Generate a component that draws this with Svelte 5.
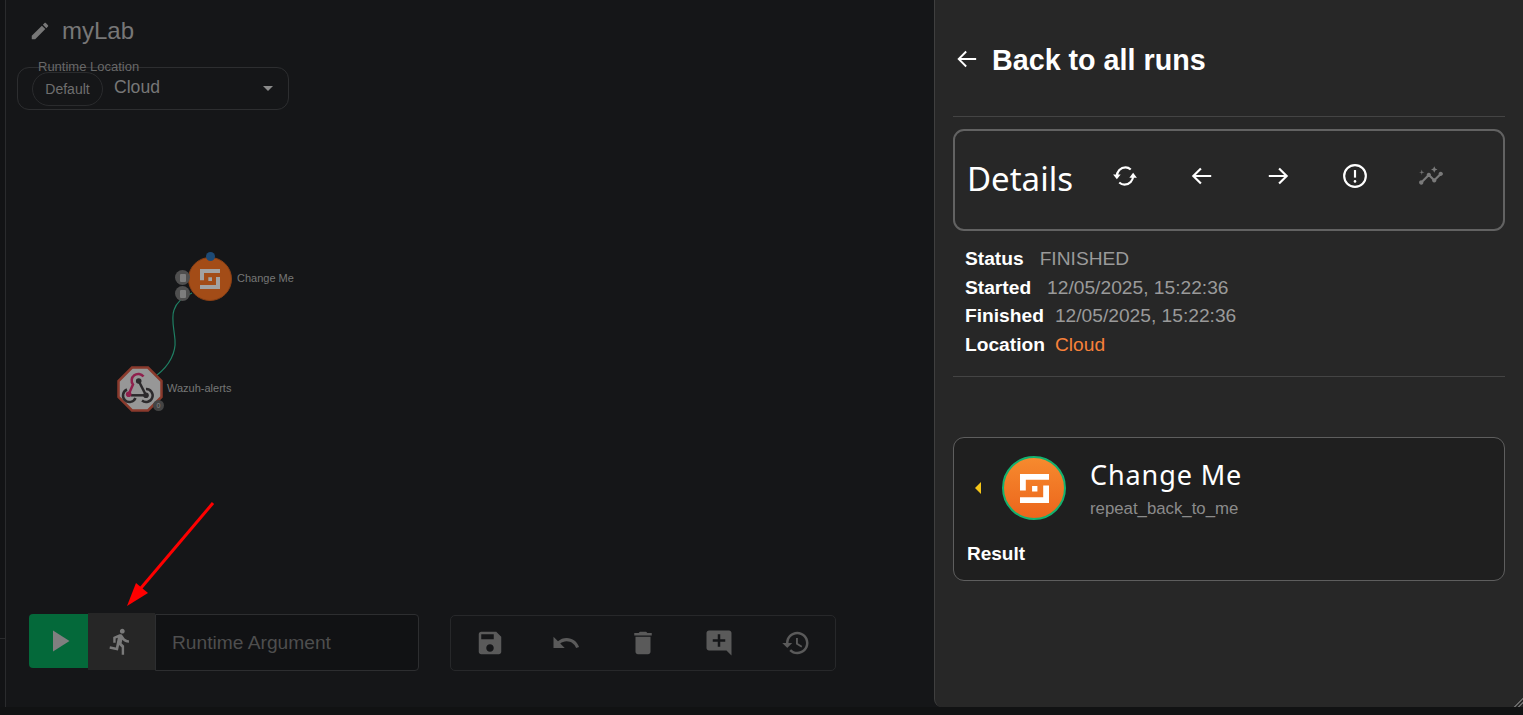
<script>
  const statusRows = [
    { label: 'Status', value: 'FINISHED' },
    { label: 'Started', value: '12/05/2025, 15:22:36' },
    { label: 'Finished', value: '12/05/2025, 15:22:36' },
    { label: 'Location', value: 'Cloud', accent: true }
  ];
  const tools = [
    'M17 3H5c-1.11 0-2 .9-2 2v14c0 1.1.89 2 2 2h14c1.1 0 2-.9 2-2V7l-4-4zm-5 16c-1.66 0-3-1.34-3-3s1.34-3 3-3 3 1.34 3 3-1.34 3-3 3zm3-10H5V5h10v4z',
    'M12.5 8c-2.65 0-5.05.99-6.9 2.6L2 7v9h9l-3.62-3.62c1.39-1.16 3.16-1.88 5.12-1.88 3.54 0 6.55 2.31 7.6 5.5l2.37-.78C21.08 11.03 17.15 8 12.5 8z',
    'M6 19c0 1.1.9 2 2 2h8c1.1 0 2-.9 2-2V7H6v12zM19 4h-3.5l-1-1h-5l-1 1H5v2h14V4z',
    'M21.99 4c0-1.1-.89-2-1.99-2H4c-1.1 0-2 .9-2 2v12c0 1.1.9 2 2 2h14l4 4-.01-18zM17 11h-4v4h-2v-4H7V9h4V5h2v4h4v2z',
    'M13 3c-4.97 0-9 4.03-9 9H1l3.89 3.89.07.14L9 12H6c0-3.87 3.13-7 7-7s7 3.13 7 7-3.13 7-7 7c-1.93 0-3.68-.79-4.94-2.06l-1.42 1.42C8.27 19.99 10.51 21 13 21c4.97 0 9-4.03 9-9s-4.03-9-9-9zm-1 5v5l4.28 2.54.72-1.21-3.5-2.08V8H12z'
  ];
</script>

{#snippet logo(size, color)}
  <svg width={size} height={size} viewBox="0 0 30 30" aria-hidden="true">
    <path fill={color} d="M0 0H30V6H6V17H0ZM24 12H30V30H0V24H24ZM12.500 12.500H18V18H12.500Z" />
  </svg>
{/snippet}

<div class="page">
  <main class="main">
    <div class="rail"><div class="rail-top"></div></div>
    <section class="canvas">
      <div class="title">
        <svg class="edit" viewBox="0 0 24 24"><path d="M3 17.25V21h3.75L17.81 9.94l-3.75-3.75L3 17.25zM20.71 7.04c.39-.39.39-1.02 0-1.41l-2.34-2.34c-.39-.39-1.02-.39-1.41 0l-1.83 1.83 3.75 3.75 1.83-1.83z" /></svg>
        <span>myLab</span>
      </div>

      <div class="location">
        <span class="legend">Runtime Location</span>
        <span class="chip">Default</span>
        <span class="loc-value">Cloud</span>
        <span class="caret"></span>
      </div>

      <div class="graph">
        <svg class="edge" width="300" height="180" viewBox="0 0 300 180">
          <path d="M157 265C170 255 176 242 175 230C174 218 171 208 174 200C176 193 183 187 192 183" fill="none" stroke="#1f7f63" stroke-width="1.2" />
        </svg>
        <div class="dot-top"></div>
        <div class="node-orange">{@render logo(20, '#a2a2a2')}</div>
        <div class="mini mini-a"><i></i></div>
        <div class="mini mini-b"><i></i></div>
        <span class="node-label label-change">Change Me</span>

        <svg class="node-hook" width="46" height="46" viewBox="0 0 46 46">
          <path d="M15 1.500H31L44.500 15V31L31 44.500H15L1.500 31V15Z" fill="#979797" stroke="#8a3a2c" stroke-width="2.500" />
          <g fill="none" stroke-width="2.500">
            <path d="M10 23.500A6.500 6.500 0 1 0 18.500 32" stroke="#2c2a2c" />
            <path d="M14 29.300H29" stroke="#2c2a2c" />
            <path d="M29 23A6.500 6.500 0 1 1 25 34.500" stroke="#2c2a2c" />
            <path d="M21.700 15L29 29.300" stroke="#2c2a2c" />
            <path d="M26.500 10.500A6.500 6.500 0 0 0 16 18.500L11.700 28.300" stroke="#8f1f4c" />
          </g>
          <circle cx="21.700" cy="15" r="2.800" fill="#2c2a2c" />
          <circle cx="29" cy="29.300" r="2.800" fill="#2c2a2c" />
          <circle cx="11.700" cy="28.300" r="2.800" fill="#8f1f4c" />
        </svg>
        <div class="count">0</div>
        <span class="node-label label-wazuh">Wazuh-alerts</span>
      </div>

      <div class="controls">
        <div class="runner">
          <button class="play" aria-label="Run">
            <svg viewBox="0 0 24 24"><path d="M8 5v14l11-7z" /></svg>
          </button>
          <button class="walk" aria-label="Runs">
            <svg viewBox="0 0 24 24"><path d="M13.49 5.48c1.1 0 2-.9 2-2s-.9-2-2-2-2 .9-2 2 .9 2 2 2zm-3.6 13.9l1-4.4 2.1 2v6h2v-7.5l-2.1-2 .6-3c1.3 1.5 3.3 2.5 5.5 2.5v-2c-1.9 0-3.5-1-4.3-2.4l-1-1.6c-.4-.6-1-1-1.7-1-.3 0-.5.1-.8.1l-5.2 2.2v4.7h2v-3.4l1.8-.7-1.6 8.1-4.9-1-.4 2 7 1.4z" /></svg>
          </button>
          <div class="argument">Runtime Argument</div>
        </div>
        <div class="toolbox">
          {#each tools as d}
            <svg class="tool" viewBox="0 0 24 24"><path {d} /></svg>
          {/each}
        </div>
      </div>

      <svg class="annotation" width="110" height="120" viewBox="0 0 110 120">
        <line x1="92" y1="8" x2="20" y2="93" stroke="#ff0000" stroke-width="3" />
        <polygon points="6,111 15,88 27,98" fill="#ff0000" />
      </svg>
    </section>

    <aside class="panel">
      <header class="back">
        <svg class="arrow-back" viewBox="0 0 24 24"><path d="M23 12H2M11 3l-9 9 9 9" /></svg>
        <h1>Back to all runs</h1>
      </header>
      <hr class="rule1" />

      <div class="details">
        <h2>Details</h2>
        <div class="detail-icons">
          <svg class="ico" viewBox="0 0 24 24"><path d="M4.500 12.500C4.300 8 8 4 12.500 4c2.200 0 3.500.8 4.800 2M19.500 11.500c.2 4.500-3.500 8.500-8 8.500-2.200 0-3.500-.8-4.800-2" /><path class="fillp" d="M1 10.500h7L4.500 15zM16 13.500h7L19.500 9z" /></svg>
          <svg class="ico" viewBox="0 0 24 24"><path d="M20.500 12H4M11 5l-7 7 7 7" /></svg>
          <svg class="ico" viewBox="0 0 24 24"><path d="M3.500 12H20M13 5l7 7-7 7" /></svg>
          <svg class="ico" viewBox="0 0 24 24"><circle cx="12" cy="12" r="10" /><path d="M12 6.500v7" /><circle class="fillp" cx="12" cy="17" r="1.200" /></svg>
          <svg class="ico ico-fill" viewBox="0 0 24 24"><path d="M21 8c-1.450 0-2.260 1.440-1.930 2.510l-3.550 3.560c-.3-.09-.74-.09-1.040 0l-2.550-2.550C12.270 10.450 11.460 9 10 9c-1.450 0-2.270 1.440-1.930 2.520l-4.560 4.550C2.440 15.740 1 16.550 1 18c0 1.100.9 2 2 2 1.450 0 2.260-1.440 1.930-2.510l4.550-4.560c.3.09.74.09 1.040 0l2.550 2.550C12.730 16.550 13.540 18 15 18c1.450 0 2.270-1.440 1.930-2.520l3.560-3.550c1.070.33 2.510-.48 2.510-1.930 0-1.100-.9-2-2-2zM15 9l.94-2.070L18 6l-2.060-.93L15 3l-.92 2.070L12 6l2.080.93zM3.500 11L4 9l2-.5L4 8l-.5-2L3 8l-2 .5L3 9z" /></svg>
        </div>
      </div>

      <dl class="status">
        {#each statusRows as row}
          <div class="status-row">
            <dt>{row.label}</dt>
            <dd class:accent={row.accent}>{row.value}</dd>
          </div>
        {/each}
      </dl>
      <hr class="rule2" />

      <article class="result-card">
        <div class="result-head">
          <span class="toggle"></span>
          <div class="avatar">{@render logo(29, '#fff')}</div>
          <div class="result-text">
            <div class="result-name">Change Me</div>
            <div class="result-action">repeat_back_to_me</div>
          </div>
        </div>
        <div class="result-label">Result</div>
      </article>
      <span class="resizer"></span>
    </aside>
  </main>
  <div class="bottom-strip"></div>
</div>

<style>
  :global(body) {
    margin: 0;
    background: #111213;
    overflow: hidden;
  }
  .page {
    width: 1523px;
    height: 715px;
    display: flex;
    flex-direction: column;
    font-family: "Liberation Sans", Arial, sans-serif;
  }
  .main {
    flex: 0 0 707px;
    display: flex;
    min-height: 0;
    background: #151618;
  }
  .bottom-strip {
    flex: 1;
    background: #111213;
  }
  .rail {
    flex: 0 0 5px;
    background: #121315;
  }
  .rail-top {
    height: 639px;
    border-bottom: 1px solid #2a2b2d;
    box-sizing: border-box;
  }
  .canvas {
    position: relative;
    flex: 1;
    box-sizing: border-box;
    display: flex;
    flex-direction: column;
    background: #151618;
    border-left: 1px solid #2a2b2d;
    padding-left: 11px;
  }
  .title {
    display: flex;
    align-items: center;
    height: 30px;
    margin: 16px 0 0 12px;
    color: #777;
    font-size: 24px;
    gap: 11px;
  }
  .edit {
    width: 22px;
    height: 22px;
    fill: #777;
  }
  .location {
    position: relative;
    box-sizing: border-box;
    width: 272px;
    height: 43px;
    margin-top: 21px;
    border: 1px solid #2d2e30;
    border-radius: 12px;
    display: flex;
    align-items: center;
  }
  .legend {
    position: absolute;
    left: 20px;
    top: -9px;
    font-size: 13px;
    line-height: 16px;
    color: #686868;
  }
  .chip {
    box-sizing: border-box;
    margin-left: 14px;
    width: 71px;
    height: 34px;
    border: 1px solid #2a2b2d;
    border-radius: 17px;
    text-align: center;
    line-height: 32px;
    font-size: 14px;
    color: #6f6f6f;
  }
  .loc-value {
    margin-left: 11px;
    font-size: 17.600px;
    color: #777;
    margin-top: -2px;
  }
  .caret {
    position: absolute;
    right: 15px;
    top: 18px;
    border-left: 5.500px solid transparent;
    border-right: 5.500px solid transparent;
    border-top: 5px solid #8a8a8a;
  }
  .graph {
    flex: 1;
    position: relative;
    margin-left: -11px;
  }
  .edge {
    position: absolute;
    left: -6px;
    top: 0;
    overflow: visible;
  }
  .node-orange {
    box-sizing: border-box;
    position: absolute;
    left: 182px;
    top: 147px;
    width: 44px;
    height: 44px;
    border-radius: 50%;
    background: #a34c17;
    border: 1px solid #8a4015;
    display: flex;
    align-items: center;
    justify-content: center;
  }
  .dot-top {
    position: absolute;
    z-index: 1;
    left: 200px;
    top: 142px;
    width: 9px;
    height: 9px;
    border-radius: 50%;
    background: #1d4a75;
  }
  .mini {
    position: absolute;
    z-index: 1;
    left: 169px;
    width: 15px;
    height: 15px;
    border-radius: 50%;
    background: #4f4f4f;
    display: flex;
    align-items: center;
    justify-content: center;
  }
  .mini i {
    width: 6px;
    height: 8px;
    background: #7d7d7d;
    border-radius: 1px;
  }
  .mini-a { top: 160px; }
  .mini-b { top: 176px; }
  .node-label {
    position: absolute;
    font-size: 11px;
    color: #767676;
    line-height: 14px;
    white-space: nowrap;
  }
  .label-change { left: 231px; top: 161px; }
  .label-wazuh { left: 161px; top: 271px; }
  .node-hook {
    position: absolute;
    left: 111px;
    top: 256px;
  }
  .count {
    position: absolute;
    left: 147px;
    top: 290px;
    width: 11px;
    height: 11px;
    border-radius: 50%;
    background: #444;
    color: #888;
    font-size: 7px;
    line-height: 11px;
    text-align: center;
  }
  .controls {
    display: flex;
    align-items: flex-start;
    gap: 31px;
    margin: 0 0 36px 12px;
  }
  .runner {
    display: flex;
    height: 57px;
    width: 390px;
  }
  .runner button {
    border: 0;
    padding: 0;
    display: flex;
    align-items: center;
    justify-content: center;
  }
  .play {
    width: 59px;
    height: 54px;
    background: #04693a;
    border-radius: 4px 0 0 4px;
    margin-top: 1px;
  }
  .play svg {
    width: 36px;
    height: 36px;
    fill: #7f7f7f;
  }
  .walk {
    width: 67px;
    height: 57px;
    background: #262626;
  }
  .walk svg {
    width: 29px;
    height: 29px;
    margin-right: 3px;
    fill: #7a7a7a;
  }
  .argument {
    flex: 1;
    box-sizing: border-box;
    height: 57px;
    margin-top: 1px;
    background: #111214;
    border: 1px solid #2d2e30;
    border-radius: 0 4px 4px 0;
    padding-left: 16px;
    line-height: 55px;
    font-size: 19.200px;
    color: #4e4e4e;
  }
  .toolbox {
    box-sizing: border-box;
    width: 386px;
    height: 56px;
    margin-top: 2px;
    border: 1px solid #27282a;
    border-radius: 5px;
    padding-left: 23.500px;
    display: flex;
    align-items: center;
    gap: 46.500px;
  }
  .tool {
    width: 30px;
    height: 30px;
    fill: #5a5a5a;
  }
  .annotation {
    position: absolute;
    left: 115px;
    top: 495px;
  }
  .panel {
    position: relative;
    flex: 0 0 589px;
    box-sizing: border-box;
    background: #272727;
    border-left: 1px solid #3f3f3f;
    border-bottom-left-radius: 8px;
    padding: 0 18px;
  }
  .resizer {
    position: absolute;
    right: 0;
    bottom: 0;
    width: 11px;
    height: 11px;
    background: repeating-linear-gradient(135deg, #6a6a6a 0 1px, #272727 1px 3px);
    clip-path: polygon(100% 0, 100% 100%, 0 100%);
  }
  .back {
    display: flex;
    align-items: center;
    height: 40px;
    margin-top: 40px;
    gap: 15px;
    color: #fff;
  }
  .arrow-back {
    width: 20px;
    height: 20px;
    margin-left: 4px;
    margin-top: -3px;
    fill: none;
    stroke: #fff;
    stroke-width: 2.200;
  }
  h1 {
    margin: 0;
    font-size: 28.700px;
    font-weight: 700;
    line-height: 40px;
  }
  hr {
    border: 0;
    height: 1px;
    background: #444;
  }
  .rule1 {
    margin: 36px 0 12px;
  }
  .details {
    box-sizing: border-box;
    height: 102px;
    border: 2px solid #626262;
    border-radius: 11px;
    display: flex;
    align-items: center;
    padding-left: 12px;
  }
  h2 {
    margin: -4px 0 0;
    font-family: "Noto Sans", "Open Sans", sans-serif;
    font-weight: 400;
    font-size: 33px;
    color: #fff;
    width: 145px;
  }
  .detail-icons {
    display: flex;
    gap: 50.500px;
    margin-top: -8px;
  }
  .ico {
    width: 26px;
    height: 26px;
    fill: none;
    stroke: #fff;
    stroke-width: 2;
  }
  .ico .fillp {
    fill: #fff;
    stroke: none;
  }
  .ico-fill {
    fill: #7a7a7a;
    stroke: none;
  }
  .status {
    margin: 14px 0 0 12px;
    font-size: 19.200px;
    line-height: 28.600px;
  }
  .status-row {
    display: flex;
    gap: 16px;
  }
  dt {
    font-weight: 700;
    color: #fff;
  }
  dd {
    margin: 0;
    color: #9a9a9a;
  }
  .status-row:nth-child(3) { gap: 11px; }
  .status-row:nth-child(4) { gap: 10px; }
  dd.accent {
    color: #f8813a;
  }
  .rule2 {
    margin: 17px 0 60px;
  }
  .result-card {
    box-sizing: border-box;
    height: 144px;
    background: #1f1f1f;
    border: 1px solid #5e5e5e;
    border-radius: 11px;
    padding: 18px 13px 0 13px;
  }
  .result-head {
    display: flex;
    align-items: center;
  }
  .toggle {
    width: 0;
    height: 0;
    margin-left: 8px;
    border-top: 6px solid transparent;
    border-bottom: 6px solid transparent;
    border-right: 6px solid #f5c518;
  }
  .avatar {
    box-sizing: border-box;
    width: 64px;
    height: 64px;
    margin-left: 21px;
    border: 2px solid #13b26f;
    border-radius: 50%;
    background: linear-gradient(#f68a2e, #ec651c);
    display: flex;
    align-items: center;
    justify-content: center;
  }
  .result-text {
    margin-left: 24px;
  }
  .result-name {
    font-family: "Noto Sans", "Open Sans", sans-serif;
    font-size: 27px;
    letter-spacing: 0.900px;
    line-height: 36px;
    color: #fff;
  }
  .result-action {
    font-size: 16.800px;
    line-height: 22px;
    color: #8b8b8b;
    margin-top: 5px;
  }
  .result-label {
    margin-top: 23px;
    font-weight: 700;
    font-size: 19px;
    color: #fff;
  }
</style>
